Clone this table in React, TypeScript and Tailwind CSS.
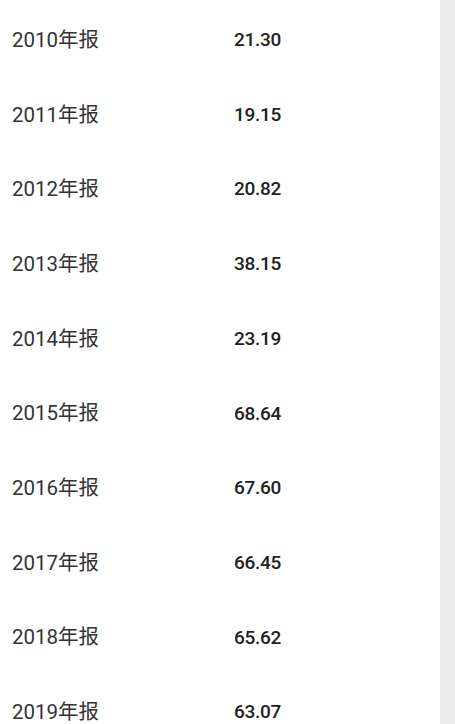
import React from 'react';

const rows = [
  { year: '2010年报', value: '21.30' },
  { year: '2011年报', value: '19.15' },
  { year: '2012年报', value: '20.82' },
  { year: '2013年报', value: '38.15' },
  { year: '2014年报', value: '23.19' },
  { year: '2015年报', value: '68.64' },
  { year: '2016年报', value: '67.60' },
  { year: '2017年报', value: '66.45' },
  { year: '2018年报', value: '65.62' },
  { year: '2019年报', value: '63.07' },
];

const App: React.FC = () => {
  return (
    <div
      className="flex h-[724px] w-[455px] overflow-hidden bg-white"
      style={{ fontFamily: 'Roboto, "Noto Sans CJK SC", sans-serif' }}
    >
      <div className="w-[440px] pt-[3px]">
        {rows.map((row) => (
          <div key={row.year} className="flex h-[74.7px] items-center">
            <span className="w-[234px] pl-[12px] text-[20.5px] text-[#333333]">{row.year}</span>
            <span className="text-[19px] font-medium tracking-[-0.3px] text-[#222222]">{row.value}</span>
          </div>
        ))}
      </div>
      <div className="w-[15px] bg-[#ebebeb]" />
    </div>
  );
};

export default App;
